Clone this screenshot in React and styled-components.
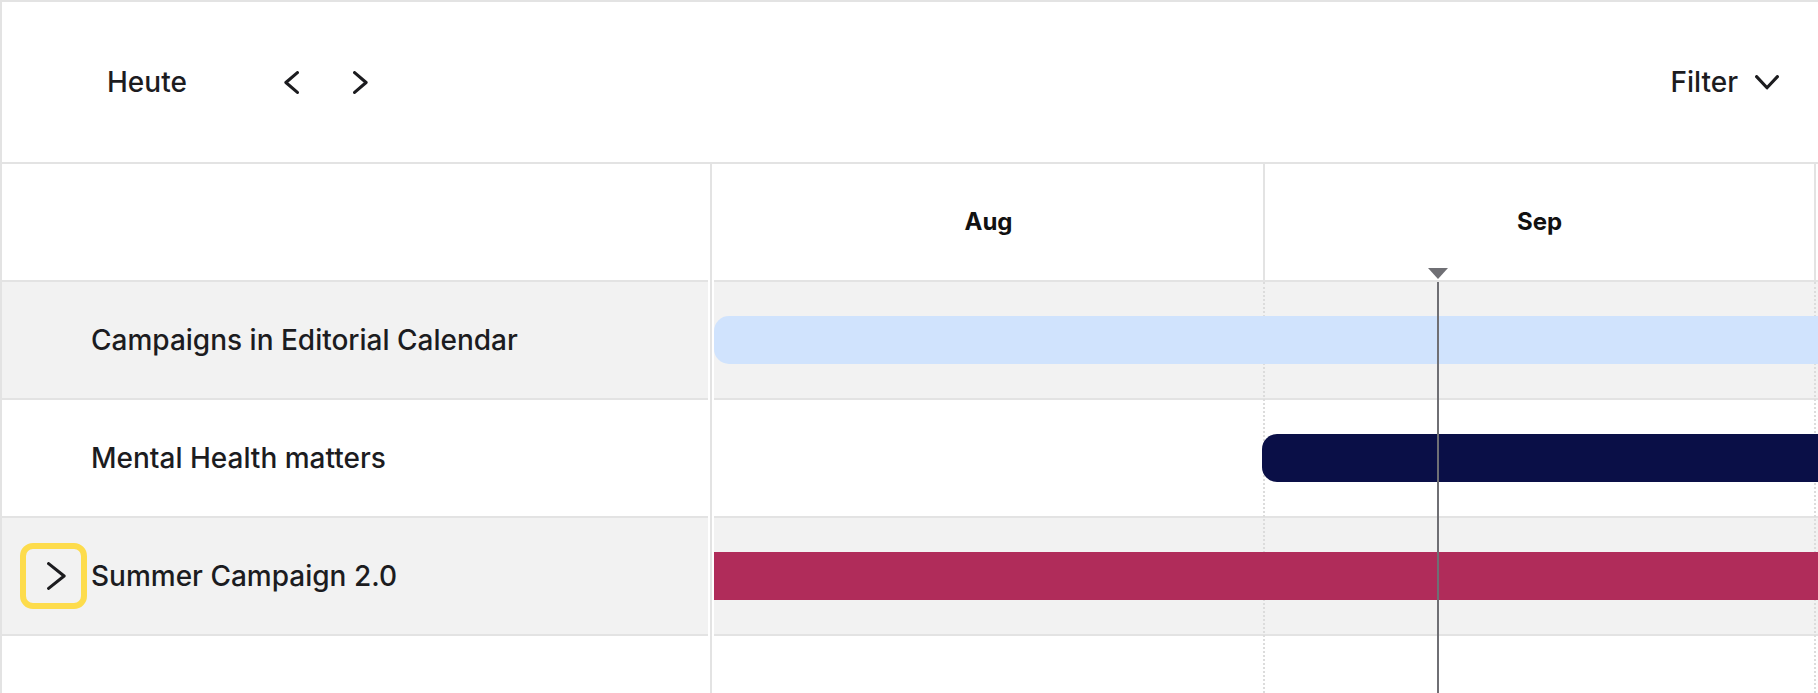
import React from 'react';
import styled, { createGlobalStyle } from 'styled-components';

const BORDER = '#e3e3e3';
const MONTH_W = 551;
const ROW_H = 118;
const TEXT = '#1c1c1f';

const GlobalStyle = createGlobalStyle`
  html, body { margin: 0; padding: 0; background: #fff; }
  body { font-family: Inter, "Noto Sans", sans-serif; color: ${TEXT}; }
  *, *::before, *::after { box-sizing: border-box; }
`;

const Frame = styled.div`
  width: 100vw;
  height: 100vh;
  overflow: hidden;
  display: flex;
  flex-direction: column;
  background: #fff;
  border-top: 2px solid ${BORDER};
  border-left: 2px solid ${BORDER};
`;

const Toolbar = styled.header`
  flex: 0 0 162px;
  display: flex;
  align-items: center;
  padding: 0 15px 0 81px;
  border-bottom: 2px solid ${BORDER};
`;

const TextButton = styled.button`
  display: inline-flex;
  align-items: center;
  gap: 17px;
  padding: 12px 24px;
  border: 0;
  background: transparent;
  font: 500 28px/34px Inter, sans-serif;
  color: ${TEXT};
  cursor: pointer;
`;

const NavGroup = styled.div`
  display: flex;
  gap: 21px;
  margin-left: 57px;
`;

const IconButton = styled.button`
  width: 48px;
  height: 48px;
  padding: 0;
  border: 0;
  background: transparent;
  color: ${TEXT};
  display: flex;
  align-items: center;
  justify-content: center;
  cursor: pointer;
`;

const Spacer = styled.div`
  flex: 1;
`;

const Board = styled.div`
  flex: 1;
  display: flex;
  min-height: 0;
`;

const LabelPanel = styled.div`
  flex: 0 0 706px;
  display: flex;
  flex-direction: column;
`;

const PanelHeader = styled.div`
  flex: 0 0 ${ROW_H}px;
  border-bottom: 2px solid ${BORDER};
`;

const LabelRow = styled.div`
  flex: 0 0 ${ROW_H}px;
  display: flex;
  align-items: center;
  gap: 4px;
  padding-left: 18px;
  background: ${(p) => (p.$shaded ? '#f2f2f2' : '#fff')};
  border-bottom: 2px solid ${BORDER};
  font: 500 28px/34px Inter, sans-serif;
  color: ${TEXT};
`;

const ToggleSlot = styled.div`
  flex: 0 0 67px;
  height: 66px;
`;

const ToggleButton = styled.button`
  width: 67px;
  height: 66px;
  padding: 0 0 0 5px;
  border: 6px solid #fddc4c;
  border-radius: 13px;
  background: transparent;
  color: ${TEXT};
  display: flex;
  align-items: center;
  justify-content: center;
  cursor: pointer;
`;

const Divider = styled.div`
  flex: 0 0 2px;
  margin: 0 2px;
  background: ${BORDER};
`;

const Timeline = styled.div`
  flex: 1;
  min-width: 0;
  overflow: hidden;
  position: relative;
`;

const TimelineCanvas = styled.div`
  width: ${MONTH_W * 3}px;
  height: 100%;
  display: flex;
  flex-direction: column;
`;

const MonthHeader = styled.div`
  flex: 0 0 ${ROW_H}px;
  display: flex;
  border-bottom: 2px solid ${BORDER};
`;

const MonthCell = styled.div`
  flex: 0 0 ${MONTH_W}px;
  display: flex;
  align-items: center;
  justify-content: center;
  border-right: 2px solid ${BORDER};
  font: 700 24px/30px Inter, sans-serif;
  color: #111;
`;

const TrackArea = styled.div`
  position: relative;
  flex: 1;
`;

const GridLines = styled.div`
  position: absolute;
  inset: 0;
  display: flex;
  z-index: 1;
  pointer-events: none;
`;

const GridColumn = styled.div`
  flex: 0 0 ${MONTH_W}px;
  border-right: 2px dotted #dcdcdc;
`;

const TrackRow = styled.div`
  height: ${ROW_H}px;
  display: flex;
  align-items: center;
  background: ${(p) => (p.$shaded ? '#f2f2f2' : '#fff')};
  border-bottom: 2px solid ${BORDER};
`;

const Bar = styled.div`
  position: relative;
  z-index: 2;
  height: 48px;
  flex: 0 0 auto;
  background: ${(p) => p.$color};
  border-radius: ${(p) => (p.$roundStart ? '15px' : '0')} 15px 15px
    ${(p) => (p.$roundStart ? '15px' : '0')};
`;

const TodayMarker = styled.div`
  position: absolute;
  top: 104px;
  bottom: 0;
  width: 20px;
  z-index: 3;
  display: flex;
  flex-direction: column;
  align-items: center;
  pointer-events: none;
`;

const TodayArrow = styled.div`
  width: 0;
  height: 0;
  border-left: 10px solid transparent;
  border-right: 10px solid transparent;
  border-top: 11px solid #6f6f74;
  margin-bottom: 3px;
`;

const TodayLine = styled.div`
  flex: 1;
  width: 2px;
  background: #6f6f74;
`;

const ChevronLeft = () => (
  <svg width="15" height="23" viewBox="0 0 15 23" fill="none">
    <polyline points="13.4,1.6 1.9,11.5 13.4,21.4" stroke="currentColor" strokeWidth="3.1" strokeLinecap="round" strokeLinejoin="round" />
  </svg>
);

const ChevronRight = ({ w = 15, h = 23 }) => (
  <svg width={w} height={h} viewBox={`0 0 ${w} ${h}`} fill="none">
    <polyline points={`1.6,1.6 ${w - 1.9},${h / 2} 1.6,${h - 1.6}`} stroke="currentColor" strokeWidth="3.1" strokeLinecap="round" strokeLinejoin="round" />
  </svg>
);

const ChevronDown = () => (
  <svg width="24" height="15" viewBox="0 0 24 15" fill="none">
    <polyline points="1.6,1.6 12,12.8 22.4,1.6" stroke="currentColor" strokeWidth="3.1" strokeLinecap="round" strokeLinejoin="round" />
  </svg>
);

const months = [
  { key: 'aug', label: 'Aug' },
  { key: 'sep', label: 'Sep' },
  { key: 'okt', label: '' },
];

const campaigns = [
  { name: 'Campaigns in Editorial Calendar', start: 0, end: 2400, color: '#d0e3fd', shaded: true },
  { name: 'Mental Health matters', start: 548, end: 2400, color: '#0a0f47', shaded: false },
  { name: 'Summer Campaign 2.0', start: -300, end: 2400, color: '#b02c5a', shaded: true, expandable: true },
];

const TODAY_OFFSET = 724;

export default function App() {
  return (
    <>
      <GlobalStyle />
      <Frame>
        <Toolbar>
          <TextButton>Heute</TextButton>
          <NavGroup>
            <IconButton aria-label="Zurück"><ChevronLeft /></IconButton>
            <IconButton aria-label="Weiter"><ChevronRight /></IconButton>
          </NavGroup>
          <Spacer />
          <TextButton>
            Filter
            <ChevronDown />
          </TextButton>
        </Toolbar>
        <Board>
          <LabelPanel>
            <PanelHeader />
            {campaigns.map((c) => (
              <LabelRow key={c.name} $shaded={c.shaded}>
                <ToggleSlot>
                  {c.expandable && (
                    <ToggleButton aria-label="Aufklappen">
                      <ChevronRight w={19} h={28} />
                    </ToggleButton>
                  )}
                </ToggleSlot>
                {c.name}
              </LabelRow>
            ))}
          </LabelPanel>
          <Divider />
          <Timeline>
            <TimelineCanvas>
              <MonthHeader>
                {months.map((m) => (
                  <MonthCell key={m.key}>{m.label}</MonthCell>
                ))}
              </MonthHeader>
              <TrackArea>
                <GridLines>
                  {months.map((m) => (
                    <GridColumn key={m.key} />
                  ))}
                </GridLines>
                {campaigns.map((c) => {
                  const left = Math.max(0, c.start);
                  return (
                    <TrackRow key={c.name} $shaded={c.shaded}>
                      <Bar
                        $color={c.color}
                        $roundStart={c.start >= 0}
                        style={{ marginLeft: left, width: c.end - left }}
                      />
                    </TrackRow>
                  );
                })}
              </TrackArea>
            </TimelineCanvas>
            <TodayMarker style={{ left: TODAY_OFFSET - 10 }}>
              <TodayArrow />
              <TodayLine />
            </TodayMarker>
          </Timeline>
        </Board>
      </Frame>
    </>
  );
}
